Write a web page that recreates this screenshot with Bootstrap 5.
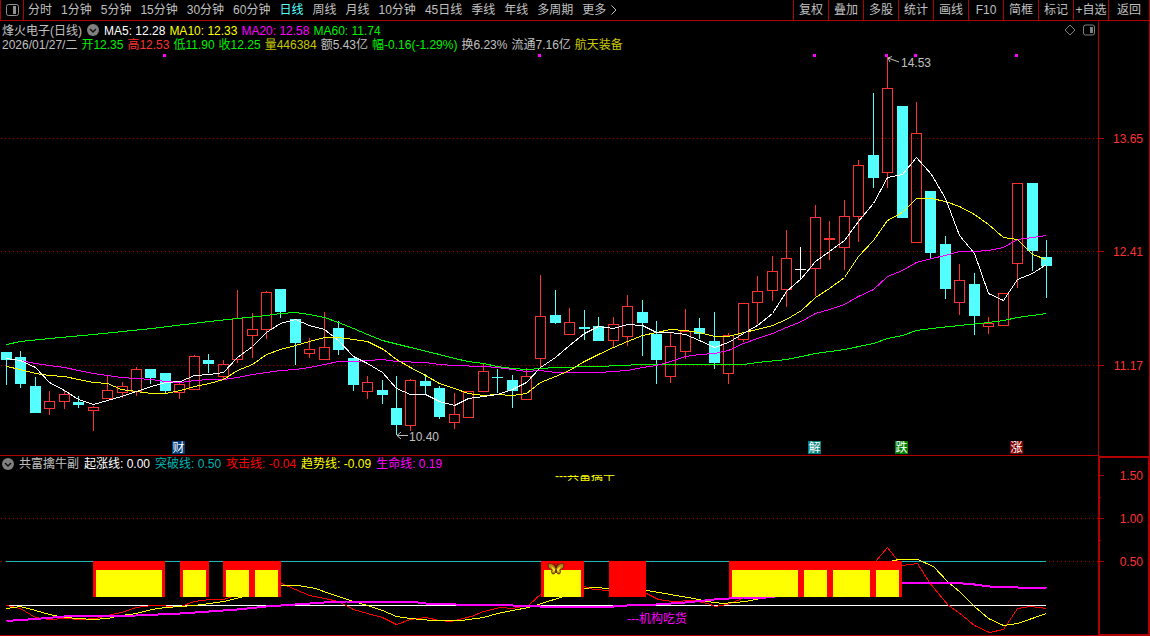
<!DOCTYPE html>
<html lang="zh-CN">
<head>
<meta charset="utf-8">
<meta name="viewport" content="width=device-width, initial-scale=1">
<title>烽火电子 日线</title>
<link href="https://cdn.jsdelivr.net/npm/bootstrap@5.3.0/dist/css/bootstrap.min.css" rel="stylesheet">
<style>
:root{--line:#b00000;--grey:#c0c0c0;--up:#ff3232;--down:#54ffff}
body{background:#000;color:var(--grey);font:12px/14px "Liberation Sans","Noto Sans CJK SC",sans-serif}
svg{display:block}
.topbar{height:21px;border-bottom:1px solid var(--line);border-left:1px solid var(--line)}
.topbar .btn,.topbar a{font-size:12px;line-height:20px;color:var(--grey);text-decoration:none;white-space:nowrap}
.topbar .btn{--bs-btn-padding-x:0;--bs-btn-padding-y:0;--bs-btn-border-radius:0;border:0}
.topbar a.active{color:var(--down)}
.topbar .side-toggle{width:23px;border-right:1px solid var(--line)}
.periods{gap:9px;padding-left:4px}
.topbar .tools .btn{width:35px;border-left:1px solid var(--line)}
.topbar .tools .btn:last-child{width:42px;border-right:1px solid var(--line)}
.panel{display:grid;grid-template-columns:1098fr 52fr}
.plot{border-bottom:1px solid var(--line);min-width:0}
.plot>svg,.scale>svg{width:100%;height:auto}
.scale>svg{overflow:visible}
.scale{display:flex;flex-direction:column;justify-content:flex-end;min-width:0;border:solid var(--line);border-width:0 1px}
.scale-active{border-width:2px}
.info{gap:4px;padding-left:2px;height:14px;line-height:16px;white-space:nowrap}
.info-top{padding-top:2px;box-sizing:content-box}
.info-sub{height:16px;gap:5px;padding-left:0}
.drop{width:14px;height:14px}
.w{color:#fff}.y{color:#ff0}.m{color:#f0f}.g{color:#00f000}.r{color:var(--up)}.o{color:#c8c800}.t{color:#00b4b4}.rr{color:#f00}
.crisp{shape-rendering:crispEdges}
.ln{fill:none}
.dots{stroke:var(--line);stroke-dasharray:1 3}
.tick{stroke:var(--line)}
.num{fill:var(--up);text-anchor:end}
text{font-size:12px}
</style>
</head>
<body>
<header class="topbar d-flex">
  <button class="btn side-toggle flex-shrink-0 d-flex align-items-center justify-content-center" type="button" aria-label="侧栏">
    <svg class="flex-shrink-0" width="13" height="12" viewBox="0 0 13 12"><rect x=".5" y=".5" width="12" height="11" rx="2" fill="none" stroke="#909090"/><rect x="7" y="2" width="3" height="8" fill="#909090"/></svg>
  </button>
  <nav class="periods d-flex flex-grow-1 overflow-hidden">
    <a href="#">分时</a><a href="#">1分钟</a><a href="#">5分钟</a><a href="#">15分钟</a><a href="#">30分钟</a><a href="#">60分钟</a><a href="#" class="active" aria-current="page">日线</a><a href="#">周线</a><a href="#">月线</a><a href="#">10分钟</a><a href="#">45日线</a><a href="#">季线</a><a href="#">年线</a><a href="#">多周期</a>
    <a href="#" class="d-flex align-items-center">更多<svg class="ms-1" width="8" height="12" viewBox="0 0 8 12"><path d="M1.500 1.500 6 6l-4.500 4.500" fill="none" stroke="#c0c0c0"/></svg></a>
  </nav>
  <div class="tools d-flex flex-shrink-0">
    <button class="btn" type="button">复权</button><button class="btn" type="button">叠加</button><button class="btn" type="button">多股</button><button class="btn" type="button">统计</button><button class="btn" type="button">画线</button><button class="btn" type="button">F10</button><button class="btn" type="button">简框</button><button class="btn" type="button">标记</button><button class="btn" type="button">+自选</button><button class="btn" type="button">返回</button>
  </div>
</header>

<main>
<section class="panel">
  <div class="plot">
    <div class="info info-top d-flex">
      <span>烽火电子(日线)</span>
      <svg class="drop flex-shrink-0" viewBox="0 0 14 14"><circle cx="7" cy="7" r="6" fill="#808080"/><path d="m4 6 3 3 3-3" fill="none" stroke="#111" stroke-width="1.500"/></svg>
      <span class="w">MA5: 12.28</span><span class="y">MA10: 12.33</span><span class="m">MA20: 12.58</span><span class="g">MA60: 11.74</span>
      <svg class="ms-auto flex-shrink-0" width="33" height="14" viewBox="0 0 33 14" fill="none" stroke="#808080"><path d="m5 2 5 5-5 5-5-5z"/><rect x="18.500" y="2" width="11" height="10" rx="2"/><path d="M25 4h3v6h-3z" fill="#808080" stroke="none"/></svg>
    </div>
    <div class="info d-flex">
      <span>2026/01/27/二</span><span class="g">开12.35</span><span class="r">高12.53</span><span class="g">低11.90</span><span class="g">收12.25</span><span class="o">量446384</span><span>额5.43亿</span><span class="g">幅-0.16(-1.29%)</span><span>换6.23%</span><span>流通7.16亿</span><span class="o">航天装备</span>
    </div>
    <svg viewBox="0 51 1098 404" role="img" aria-label="日K线">
      <g class="crisp">
        <path class="dots" d="M1 138.500H1098M1 251.500H1098M1 365.500H1098"/>
        <g id="candles"></g>
        <g id="averages"></g>
        <path fill="#f0f" d="M163 54h3v3h-3zM538 54h3v3h-3zM813 54h3v3h-3zM885 54h3v3h-3zM914 54h3v3h-3zM1015 54h3v3h-3z"/>
      </g>
      <g fill="none" stroke="#c0c0c0"><path d="m888 58 11 4M892 56.500l-4 1.500 2 4"/><path d="M397 435.500h11M401 432l-4 3.500 4 3.500"/></g>
      <g fill="#c0c0c0"><text x="901" y="67">14.53</text><text x="409" y="441">10.40</text></g>
      <g id="events" text-anchor="middle"></g>
    </svg>
  </div>
  <div class="scale">
    <svg viewBox="1099 51 50 405">
      <path class="tick crisp" d="M1099 138.500h5M1099 251.500h5M1099 365.500h5"/>
      <g class="num"><text x="1143" y="143">13.65</text><text x="1143" y="256">12.41</text><text x="1143" y="370">11.17</text></g>
    </svg>
  </div>
</section>

<section class="panel">
  <div class="plot">
    <div class="info info-sub d-flex align-items-center">
      <svg class="drop flex-shrink-0" viewBox="-1 0 14 14"><circle cx="7" cy="7" r="6" fill="#808080"/><path d="m4 6 3 3 3-3" fill="none" stroke="#111" stroke-width="1.500"/></svg>
      <span>共富擒牛副</span><span class="w">起涨线: 0.00</span><span class="t">突破线: 0.50</span><span class="rr">攻击线: -0.04</span><span class="y">趋势线: -0.09</span><span class="m">生命线: 0.19</span>
    </div>
    <svg viewBox="0 472 1098 163" role="img" aria-label="共富擒牛副">
      <defs><clipPath id="lower"><rect x="550" y="475" width="80" height="10"/></clipPath></defs>
      <g class="crisp">
        <path class="dots" d="M1 518.500H1098M1 561.500H1098"/>
        <path d="M6 561.500H1046" stroke="#20b8b8"/>
        <path d="M6 605.500H1046" stroke="#fff"/>
        <g id="trend"></g>
        <g id="blocks"></g>
      </g>
      <g transform="translate(548 562)" stroke="#3a2400" stroke-width=".8">
        <path d="M8 6C6 2 3 1 0 2c0 3 1 5 4 6-1 2 0 4 1 4 2 0 3-2 3-4 0 2 1 4 3 4 1 0 2-2 1-4 3-1 4-3 4-6-3-1-6 0-8 4z" fill="#b98a10"/>
        <path d="M7 7 3 4l2 4-.5 2L7 9zM9 7l4-3-2 4 .5 2L9 9z" fill="#ffe020" stroke="none"/>
        <path d="M8 11V5L6 1M8 5l2-4" fill="none"/>
      </g>
      <text x="555" y="480" fill="#ff0" clip-path="url(#lower)">---共富擒牛</text>
      <text x="627" y="623" fill="#f0f">---机构吃货</text>
    </svg>
  </div>
  <div class="scale scale-active">
    <svg viewBox="1100 472 48 162">
      <path class="tick crisp" d="M1100 475.500h4M1100 518.500h4M1100 561.500h4M1100 497.500h1M1100 540.500h1"/>
      <g class="num"><text x="1143" y="480">1.50</text><text x="1143" y="523">1.00</text><text x="1143" y="566">0.50</text></g>
    </svg>
  </div>
</section>
</main>

<script>
// each day: kind (u up, d down, f flat), high, body top, body bottom, low
const days = `d352,352,360,385 d351,357,384,388 d377,386,413,413 u391,401,409,415 u391,394,402,409 d396,402,405,408
u406,407,411,431 u375,390,399,399 u382,386,393,398 u367,369,392,396 d369,369,378,384 d373,373,391,394
u382,384,393,399 u355,356,390,390 d354,360,364,373 u360,364,377,379 u290,318,360,363 u313,329,336,358
u291,292,330,339 d289,289,312,318 d319,319,343,365 u338,349,354,358 u312,347,360,360 d321,328,350,355
d358,358,385,391 u376,382,392,399 d380,390,395,404 d376,408,425,435 u379,380,426,431 d374,381,386,394
d386,388,417,419 u393,414,423,429 u391,391,418,418 u363,371,392,392 d369,377,378,393 d375,380,391,408
u368,376,400,400 u275,316,359,367 d290,315,323,324 u308,322,335,335 d310,327,329,340 d317,326,341,341
u317,324,341,348 u295,306,337,346 d300,312,323,356 d321,334,360,384 u332,346,377,383 u309,331,352,359
d318,328,334,339 d312,341,363,369 u333,335,374,384 u303,303,340,342 u276,291,303,324 u256,271,291,301
u230,258,290,307 f247,269,270,280 u205,217,269,296 u221,238,240,260 u200,216,248,270 u160,165,217,242
d93,155,178,188 u57,88,173,188 d106,106,218,218 u102,133,243,243 d191,191,253,258 d236,244,289,299
u264,280,303,315 d273,284,316,335 u317,323,327,334 u293,293,326,326 u183,183,264,288 d183,183,251,271 d240,257,266,298`.split(/\s+/);
const colour = {u:'#ff3232', d:'#54ffff', f:'#ffffff'};
const step = 1040 / (days.length - 1);
document.getElementById('candles').innerHTML = days.map((s, i) => {
  const x = Math.round(6 + i * step), c = colour[s[0]];
  const [h, t, b, l] = s.slice(1).split(',').map(Number);
  const wick = `<path d="M${x + .5} ${h}V${t}M${x + .5} ${b}V${l}" stroke="${c}"/>`;
  return wick + (s[0] === 'u' && b - t > 2
    ? `<rect x="${x - 4.5}" y="${t + .5}" width="10" height="${b - t - 1}" fill="none" stroke="${c}"/>`
    : `<rect x="${x - 5}" y="${t}" width="11" height="${b - t}" fill="${c}"/>`);
}).join('');

const line = (pts, c, w = 1) => `<polyline class="ln" points="${pts}" stroke="${c}" stroke-width="${w}" transform="translate(.5 .5)"/>`;
document.getElementById('averages').innerHTML =
line('6,344 20,341 49,338 93,334 151,328 209,321 237,318 266,315 280,313 295,312 309,314 324,317 338,322 353,328 367,334 382,340 410,347 439,354 454,358 468,361 483,363 497,366 512,368 526,369 555,367 598,366 642,364 743,364 757,362 786,359 801,356 815,353 844,349 873,343 887,338 902,335 916,330 931,328 959,325 988,322 1003,320 1017,317 1046,313', '#00ff00') +
line('6,358 20,360 35,363 49,365 64,367 78,370 93,373 107,375 121,377 136,378 151,379 165,381 180,382 194,380 209,379 223,379 237,377 252,374 266,372 280,370 295,369 309,367 324,364 338,361 353,361 382,359 396,361 425,362 439,364 454,365 483,366 497,367 512,369 526,371 540,370 555,372 598,372 613,371 627,370 642,367 656,365 670,361 685,356 699,354 714,353 728,350 743,343 757,338 772,333 786,327 801,321 815,313 829,309 844,304 858,296 873,289 887,276 902,270 916,262 931,258 945,255 959,251 974,251 988,250 1003,247 1017,239 1032,237 1046,235', '#ff00ff') +
line('6,366 20,369 35,373 49,375 64,376 78,379 93,382 107,383 121,389 136,391 151,393 165,393 180,390 194,386 209,383 223,379 237,370 252,364 266,354 280,349 295,345 309,341 324,337 338,337 353,339 367,341 383,349 396,359 410,367 425,375 439,383 454,388 468,393 483,395 497,394 512,395 526,393 540,382 555,376 569,370 584,361 598,354 613,347 627,341 642,335 656,332 670,329 685,330 699,332 714,336 728,336 743,332 757,329 772,325 786,319 801,310 815,297 829,288 844,277 858,256 873,240 887,220 902,212 916,198 931,198 945,201 959,206 974,214 988,224 1003,237 1017,239 1032,254 1046,259', '#ffff00') +
line('6,358 20,360 35,367 49,382 64,390 78,399 93,404 107,400 121,396 136,391 151,386 165,382 180,381 194,375 209,374 223,372 237,357 252,346 266,332 280,323 295,319 309,325 324,329 338,340 353,356 367,363 382,372 396,388 410,394 425,394 439,401 454,405 468,398 483,396 497,394 512,389 526,382 540,367 555,357 569,345 584,333 598,326 613,328 627,324 642,325 656,332 670,332 685,334 699,340 714,347 728,342 743,333 757,325 772,313 786,291 801,278 815,261 829,251 844,240 858,221 873,203 887,177 902,174 916,157 931,174 945,198 959,235 974,253 988,293 1003,300 1017,279 1032,273 1046,264', '#ffffff');

document.getElementById('trend').innerHTML =
line('6,605 20,608 35,617 49,619 64,618 80,619 96,618 107,615 121,612 136,607 151,605 180,606 194,601 209,599 223,599 250,590 281,583 295,589 309,595 324,598 338,601 353,609 367,613 382,617 396,624 410,619 425,617 439,620 450,621 471,616 483,611 500,607 512,608 528,605 541,593 560,582 584,586 593,589 609,590 646,593 658,599 672,601 693,600 707,603 715,606 727,604 737,600 760,590 860,575 875,561 887,547 898,561 902,565 917,563 929,582 947,604 962,615 974,625 989,632 1003,629 1017,608 1030,606 1046,608', '#ff0000') +
line('6,608 20,606 35,610 49,614 64,617 78,618 93,619 107,618 121,615 136,613 151,609 165,607 194,605 209,603 223,601 240,597 260,590 281,585 298,585 315,588 329,593 350,600 367,605 382,610 396,616 410,618 432,620 461,620 483,617 497,613 512,610 528,607 541,603 560,597 584,588 593,587 609,588 646,590 670,594 693,598 707,601 722,603 745,601 765,597 850,580 890,561 898,559 917,559 933,566 947,581 960,592 974,606 988,618 1003,625 1017,623 1046,613', '#ffff00') +
line('6,620.5 20,619.5 35,618.5 64,616 136,615 180,613 209,611 237,609 266,606 295,604 324,602 346,601 410,601 425,603 455,604 512,605 540,606 613,606 627,605 656,604 685,602 714,599 743,597 765,597 902,583 930,582 950,582 974,584 989,586 1017,587 1046,588', '#ff00ff', 2);

const box = (l, r, t, c) => `<rect x="${l}" y="${t}" width="${r - l}" height="${597 - t}" fill="${c}"/>`;
document.getElementById('blocks').innerHTML =
  [[93,165],[180,209],[223,281],[541,584],[609,646],[729,902]].map(([l, r]) => box(l, r, 561, '#ff0000')).join('') +
  [[96,162],[183,206],[226,249],[255,278],[544,581],[732,798],[804,827],[833,870],[876,899]].map(([l, r]) => box(l, r, 570, '#ffff00')).join('');

document.getElementById('events').innerHTML =
  [[172,'财','#003c78'],[808,'解','#008080'],[895,'跌','#008000'],[1010,'涨','#800000']].map(([x, s, c]) =>
    `<rect x="${x}" y="441" width="13" height="13" fill="${c}"/><text x="${x + 6.5}" y="452" fill="#fff">${s}</text>`).join('');
</script>
<script src="https://cdn.jsdelivr.net/npm/bootstrap@5.3.0/dist/js/bootstrap.bundle.min.js"></script>
</body>
</html>
